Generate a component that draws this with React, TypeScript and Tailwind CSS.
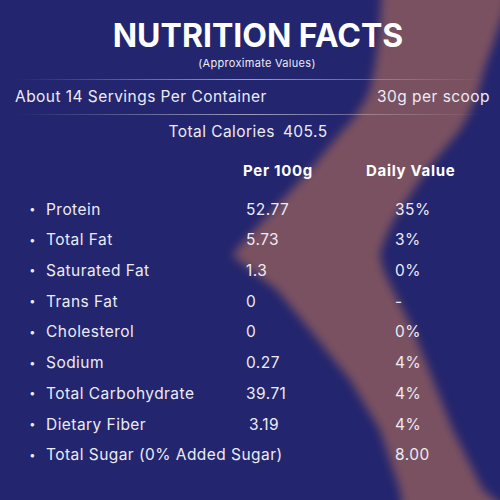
import React from "react";

const rows = [
  { name: "Protein", per: "52.77", dv: "35%" },
  { name: "Total Fat", per: "5.73", dv: "3%" },
  { name: "Saturated Fat", per: "1.3", dv: "0%" },
  { name: "Trans Fat", per: "0", dv: "-" },
  { name: "Cholesterol", per: "0", dv: "0%" },
  { name: "Sodium", per: "0.27", dv: "4%" },
  { name: "Total Carbohydrate", per: "39.71", dv: "4%" },
  { name: "Dietary Fiber", per: "3.19", dv: "4%", indent: true },
  { name: "Total Sugar (0% Added Sugar)", per: "", dv: "8.00" },
];

function Backdrop() {
  // blurred salmon band behind the table
  return (
    <svg className="absolute inset-0" width="500" height="500" viewBox="0 0 500 500">
      <defs>
        <filter id="soft" x="-20%" y="-20%" width="140%" height="140%">
          <feGaussianBlur stdDeviation="5" />
        </filter>
      </defs>
      <path
        filter="url(#soft)"
        fill="#7a5161"
        d="M382 -20 Q380 60 368 95 Q356 118 343 130 L310 170 L273 210 Q245 240 232 255 Q250 270 277 290 L310 330 L350 380 L380 430 L400 490 L404 520 L520 520 L483 490 L453 430 L433 380 L413 330 L393 290 Q382 270 380 254 Q386 232 400 210 L427 170 L460 130 Q478 100 484 70 L505 10 L510 -20 Z"
      />
    </svg>
  );
}

function Rule() {
  return <div className="mx-[15px] h-px bg-linear-to-r from-transparent via-white/55 to-transparent" />;
}

export default function App() {
  return (
    <div className="relative w-[500px] h-[500px] overflow-hidden bg-[#23256e] text-[#ecebf4] font-['Inter',sans-serif]">
      <Backdrop />
      <div className="relative flex flex-col">
        <div className="mt-[16px] h-[40px] flex items-center justify-center text-[32px] font-bold leading-none text-white pl-[16px]">
          NUTRITION FACTS
        </div>
        <div className="h-[14px] flex items-center justify-center text-[11px] leading-none tracking-[0.3px] pl-[14px]">
          (Approximate Values)
        </div>
        <div className="mt-[9px]">
          <Rule />
        </div>
        <div className="h-[34px] flex items-center justify-between pl-[15px] pr-[10px] text-[15.5px] tracking-[0.45px]">
          <span>About 14 Servings Per Container</span>
          <span>30g per scoop</span>
        </div>
        <Rule />
        <div className="h-[34px] flex items-center justify-center text-[15.5px] tracking-[0.45px] gap-[8px] pr-[4px]">
          <span>Total Calories</span>
          <span>405.5</span>
        </div>
        <div className="h-[45px] grid grid-cols-[243px_123px_1fr] items-center text-[15px] font-bold tracking-[0.7px] text-white">
          <span />
          <span>Per 100g</span>
          <span>Daily Value</span>
        </div>
        <ul className="flex flex-col">
          {rows.map((r) => (
            <li
              key={r.name}
              className="h-[30.7px] grid grid-cols-[46px_200px_149px_1fr] items-center text-[15.5px] tracking-[0.45px]"
            >
              <span className="justify-self-end pr-[10px] text-[11px]">•</span>
              <span className="whitespace-nowrap">{r.name}</span>
              <span className={r.indent ? "pl-[3px]" : ""}>{r.per}</span>
              <span>{r.dv}</span>
            </li>
          ))}
        </ul>
      </div>
    </div>
  );
}
